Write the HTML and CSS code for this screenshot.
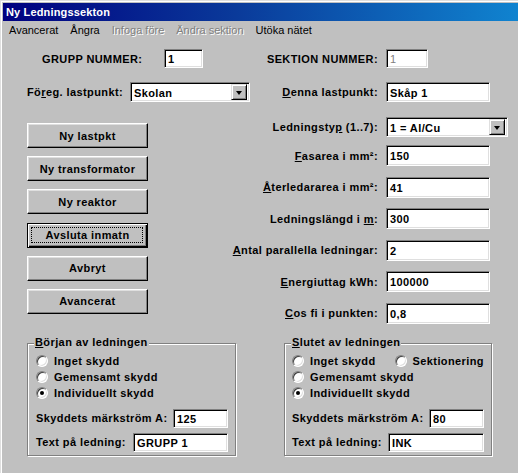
FILE: index.html
```html
<!DOCTYPE html>
<html lang="sv">
<head>
<meta charset="utf-8">
<title>Ny Ledningssekton</title>
<link rel="stylesheet" href="styles.css">
</head>
<body>
<div class="window">
  <div class="titlebar">Ny Ledningssekton</div>
  <div class="menubar">
    <span class="mi">Avancerat</span>
    <span class="mi">Ångra</span>
    <span class="mi dis">Infoga före</span>
    <span class="mi dis">Ändra sektion</span>
    <span class="mi">Utöka nätet</span>
  </div>

  <div class="toprow row1">
    <div class="lside l1">
      <span class="lbl w-grupp">GRUPP NUMMER:</span>
      <div class="field w39 h19">1</div>
    </div>
    <div class="rside">
      <span class="lbl rl">SEKTION NUMMER:</span>
      <div class="field w42 h19 disabled">1</div>
    </div>
  </div>

  <div class="toprow row2">
    <div class="lside l2">
      <span class="lbl w-foreg">Fö<u>r</u>eg. lastpunkt:</span>
      <div class="field combo w120 h20"><span class="cv">Skolan</span><span class="arrow"></span></div>
    </div>
    <div class="rside">
      <span class="lbl rl"><u>D</u>enna lastpunkt:</span>
      <div class="field w104 h20">Skåp 1</div>
    </div>
  </div>

  <div class="mid">
    <div class="buttons">
      <div class="btn">Ny lastpkt</div>
      <div class="btn">Ny transformator</div>
      <div class="btn">Ny reaktor</div>
      <div class="btn def">Avsluta inmatn</div>
      <div class="btn">Avbryt</div>
      <div class="btn">Avancerat</div>
    </div>
    <div class="form">
      <div class="frow first">
        <span class="lbl rl">Ledningsty<u>p</u> (1..7):</span>
        <div class="field combo w122 h20"><span class="cv">1 = Al/Cu</span><span class="arrow"></span></div>
      </div>
      <div class="frow">
        <span class="lbl rl"><u>F</u>asarea i mm²:</span>
        <div class="field w104 h21">150</div>
      </div>
      <div class="frow">
        <span class="lbl rl"><u>Å</u>terledararea i mm²:</span>
        <div class="field w104 h21">41</div>
      </div>
      <div class="frow">
        <span class="lbl rl">Ledningslängd i <u>m</u>:</span>
        <div class="field w104 h21">300</div>
      </div>
      <div class="frow">
        <span class="lbl rl"><u>A</u>ntal parallella ledningar:</span>
        <div class="field w104 h21">2</div>
      </div>
      <div class="frow">
        <span class="lbl rl"><u>E</u>nergiuttag kWh:</span>
        <div class="field w104 h21">100000</div>
      </div>
      <div class="frow">
        <span class="lbl rl"><u>C</u>os fi i punkten:</span>
        <div class="field w104 h21">0,8</div>
      </div>
    </div>
  </div>

  <div class="groups">
    <div class="group gleft">
      <span class="legend"><u>B</u>örjan av ledningen</span>
      <div class="rrow"><span class="radio"></span><span class="rtext">Inget skydd</span></div>
      <div class="rrow"><span class="radio"></span><span class="rtext">Gemensamt skydd</span></div>
      <div class="rrow"><span class="radio on"></span><span class="rtext">Individuellt skydd</span></div>
      <div class="grow g1">
        <span class="lbl">Skyddets märkström A:</span>
        <div class="field w55 h19">125</div>
      </div>
      <div class="grow g2">
        <span class="lbl">Text på ledning:</span>
        <div class="field w95 h19">GRUPP 1</div>
      </div>
    </div>
    <div class="group gright">
      <span class="legend"><u>S</u>lutet av ledningen</span>
      <div class="rrow">
        <span class="ritem"><span class="radio"></span><span class="rtext">Inget skydd</span></span>
        <span class="ritem"><span class="radio"></span><span class="rtext">Sektionering</span></span>
      </div>
      <div class="rrow"><span class="radio"></span><span class="rtext">Gemensamt skydd</span></div>
      <div class="rrow"><span class="radio on"></span><span class="rtext">Individuellt skydd</span></div>
      <div class="grow g1">
        <span class="lbl">Skyddets märkström A:</span>
        <div class="field w55 h19">80</div>
      </div>
      <div class="grow g2">
        <span class="lbl">Text på ledning:</span>
        <div class="field w96 h19">INK</div>
      </div>
    </div>
  </div>
</div>
</body>
</html>
```

FILE: styles.css
```css
* { box-sizing: border-box; }
html, body { margin: 0; padding: 0; }
body {
  background: #c0c0c0;
  font-family: "Liberation Sans", Arial, sans-serif;
  font-size: 11px;
  color: #000;
}
.window {
  width: 518px;
  height: 473px;
  background: #c0c0c0;
  padding-top: 3px;
  padding-left: 3px;
  box-shadow: inset 1px 1px 0 #dfdfdf, inset 2px 2px 0 #fff;
  overflow: hidden;
}
.titlebar {
  height: 18px;
  margin-right: -3px;
  background: linear-gradient(to right, #000080 0%, #0a3a9a 45%, #1084d0 100%);
  color: #fff;
  font-weight: bold;
  letter-spacing: 0.15px;
  padding-left: 3px;
  display: flex;
  align-items: center;
}
.menubar {
  height: 17px;
  display: flex;
  align-items: center;
  margin-left: -3px;
  padding-left: 3px;
}
.mi { padding: 0 6px; white-space: nowrap; }
.mi.dis { color: #808080; text-shadow: 1px 1px 0 #fff; }

.lbl {
  font-weight: bold;
  letter-spacing: 0.4px;
  white-space: nowrap;
}
.toprow {
  display: flex;
  align-items: center;
  margin-left: -3px;
}
.row1 { margin-top: 11px; height: 19px; }
.row2 { margin-top: 14px; height: 20px; }
.lside { width: 258px; display: flex; align-items: center; }
.l1 { padding-left: 42px; }
.l2 { padding-left: 27px; }
.w-grupp { width: 122px; }
.w-foreg { width: 103px; }
.rside {
  flex: 1;
  display: grid;
  grid-template-columns: 1fr 122px;
  column-gap: 8px;
  padding-right: 10px;
  align-items: center;
}
.rl { justify-self: end; }

.field {
  background: #fff;
  border-style: solid;
  border-width: 1px;
  border-color: #808080 #fff #fff #808080;
  box-shadow: inset 1px 1px 0 #000, inset -1px -1px 0 #dfdfdf;
  font-weight: bold;
  letter-spacing: 0.4px;
  padding-left: 3px;
  padding-top: 1px;
  display: flex;
  align-items: center;
  white-space: nowrap;
}
.field.disabled { color: #808080; font-weight: normal; }
.w39 { width: 39px; } .w42 { width: 42px; } .w55 { width: 55px; }
.w95 { width: 95px; } .w96 { width: 96px; } .w104 { width: 104px; }
.w120 { width: 120px; } .w122 { width: 122px; }
.h19 { height: 19px; } .h20 { height: 20px; } .h21 { height: 21px; }

.combo { padding-right: 2px; padding-top: 0; }
.cv { flex: 1; padding-top: 1px; }
.arrow {
  width: 16px;
  height: 16px;
  background: #c0c0c0;
  border: 1px solid;
  border-color: #dfdfdf #000 #000 #dfdfdf;
  box-shadow: inset 1px 1px 0 #fff, inset -1px -1px 0 #808080;
  display: flex;
  align-items: center;
  justify-content: center;
}
.arrow::before {
  content: "";
  width: 0; height: 0;
  border-left: 3.5px solid transparent;
  border-right: 3.5px solid transparent;
  border-top: 4px solid #000;
  margin-top: 1px;
}

.mid {
  display: flex;
  align-items: flex-start;
  margin-left: -3px;
  margin-top: 15px;
}
.buttons {
  margin-left: 27px;
  margin-top: 6px;
  width: 121px;
  display: flex;
  flex-direction: column;
  gap: 8.2px;
}
.btn {
  position: relative;
  height: 25px;
  background: #c0c0c0;
  border: 1px solid;
  border-color: #fff #000 #000 #fff;
  box-shadow: inset -1px -1px 0 #808080, inset 1px 1px 0 #dfdfdf;
  font-weight: bold;
  letter-spacing: 0.4px;
  display: flex;
  align-items: center;
  justify-content: center;
  white-space: nowrap;
}
.btn.def {
  border: 1px solid #000;
  box-shadow: inset 1px 1px 0 #fff, inset -1px -1px 0 #000, inset -2px -2px 0 #808080;
}
.btn.def::after {
  content: "";
  position: absolute;
  left: 3px; top: 3px; right: 4px; bottom: 4px;
  border: 1px dotted #000;
}
.form {
  flex: 1;
  display: flex;
  flex-direction: column;
  gap: 10.6px;
  padding-right: 10px;
}
.frow {
  display: grid;
  grid-template-columns: 1fr 122px;
  column-gap: 8px;
  align-items: center;
}
.frow.first { margin-bottom: -2.6px; }

.groups {
  display: flex;
  margin-left: -3px;
  margin-top: 19px;
}
.group {
  position: relative;
  height: 113px;
  border: 1px solid #808080;
  box-shadow: inset 1px 1px 0 #fff, 1px 1px 0 #fff;
  padding-top: 9px;
  padding-right: 7px;
}
.gleft { margin-left: 27px; width: 209px; padding-left: 8px; }
.gright { margin-left: 48px; width: 208px; padding-left: 7px; }
.legend {
  position: absolute;
  top: -8px;
  left: 6px;
  padding: 0 1px;
  background: #c0c0c0;
  font-weight: bold;
  letter-spacing: 0.4px;
  white-space: nowrap;
}
.gright .legend { left: 6px; }
.rrow {
  height: 16px;
  display: flex;
  align-items: center;
}
.ritem { display: flex; align-items: center; }
.ritem:first-child { width: 104px; }
.radio {
  width: 12px;
  height: 12px;
  border-radius: 50%;
  background: #fff;
  border: 1px solid;
  border-color: #808080 #fff #fff #808080;
  box-shadow: inset 1px 1px 0 #404040, inset -1px -1px 0 #dfdfdf;
  display: flex;
  align-items: center;
  justify-content: center;
  flex: none;
}
.radio.on::before {
  content: "";
  width: 4px;
  height: 4px;
  border-radius: 50%;
  background: #000;
}
.rtext {
  margin-left: 6px;
  font-weight: bold;
  letter-spacing: 0.4px;
  white-space: nowrap;
}
.grow {
  display: flex;
  align-items: center;
  justify-content: space-between;
  height: 19px;
}
.g1 { margin-top: 8px; }
.g2 { margin-top: 5px; }
```
